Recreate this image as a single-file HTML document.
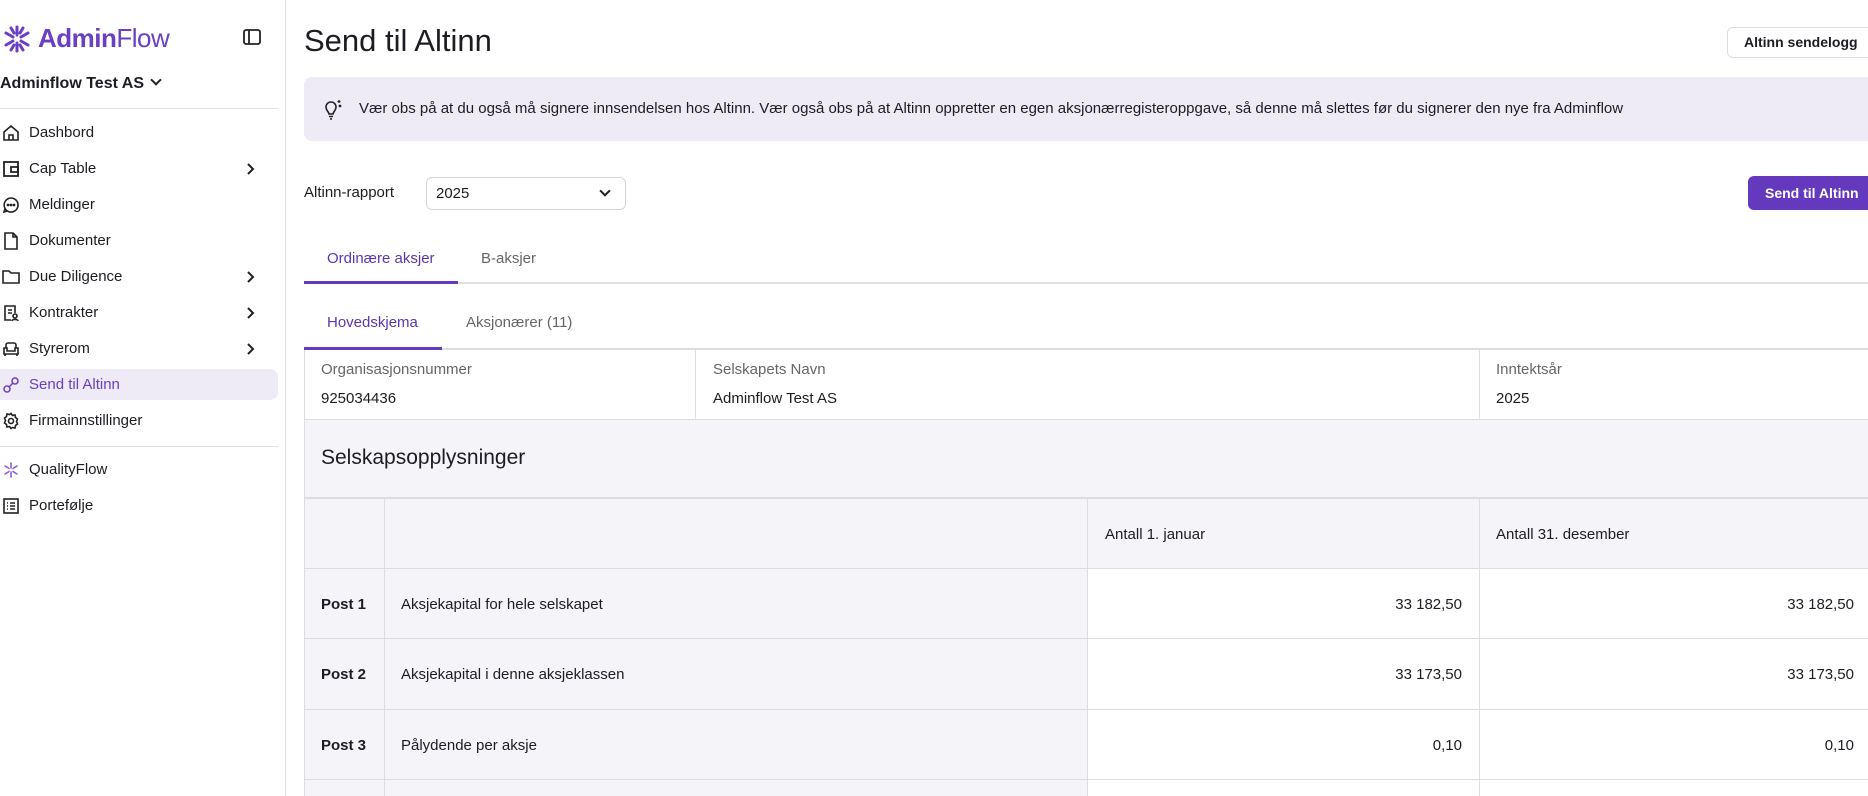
<!DOCTYPE html>
<html><head><meta charset="utf-8"><style>
*{box-sizing:border-box;margin:0;padding:0}
body{width:1868px;height:796px;overflow:hidden;background:#fff;font-family:"Liberation Sans",sans-serif;color:#1c1c22;position:relative}
.a{position:absolute;white-space:nowrap}
.side{position:absolute;left:0;top:0;width:286px;height:796px;border-right:1px solid #e0e0e0}
.nav{position:absolute;left:0;width:278px;height:31px;font-size:15px;line-height:31px;padding-left:29px}
.nav svg{position:absolute;left:2px;top:7px}
.nav svg.chev{left:246px;top:9px}
.hr{position:absolute;background:#e0e0e0;height:1px}
.vr{position:absolute;background:#dedde3;width:1px}
.lbl{font-size:15px;color:#666}
.cell{font-size:15px}
</style></head><body>
<div class="side">
 <svg class="a" style="left:2px;top:24px" width="30" height="30" viewBox="0 0 30 30" fill="none" stroke="#6a3fc4" stroke-width="3" stroke-linecap="round"><path d="M15 3v8M15 19v8M4 9l7 4M19 17l7 4M4 21l7-4M19 13l7-4M9 4l3 5M21 4l-3 5M9 26l3-5M21 26l-3-5"/></svg>
 <div class="a" style="left:38px;top:23px;font-size:26px;color:#6a3fc4;font-weight:bold;letter-spacing:-0.5px">Admin<span style="font-weight:normal">Flow</span></div>
 <svg class="a" style="left:243px;top:29px" width="18" height="16" viewBox="0 0 18 16" fill="none" stroke="#222" stroke-width="1.8"><rect x="1" y="1" width="16" height="14" rx="2"/><path d="M6 1v14"/></svg>
 <div class="a" style="left:0;top:75px;font-size:16px;font-weight:bold">Adminflow Test AS <span style="display:inline-block;width:8px;height:8px;border-right:2px solid #222;border-bottom:2px solid #222;transform:rotate(45deg);margin:0 0 4px 4px"></span></div>
 <div class="hr" style="left:0;top:108px;width:278px"></div>
 <div class="nav" style="top:117px"><svg width="18" height="18" viewBox="0 0 18 18" fill="none" stroke="#222" stroke-width="1.6"><path d="M2 8l7-6 7 6v8H2z"/><path d="M7 16v-5h4v5"/></svg>Dashbord</div>
 <div class="nav" style="top:153px"><svg width="18" height="18" viewBox="0 0 18 18" fill="none" stroke="#222" stroke-width="1.8"><rect x="2" y="2" width="14" height="14"/><path d="M9 7h7v5H9z"/></svg>Cap Table<svg class="chev" width="10" height="14" viewBox="0 0 10 14" fill="none" stroke="#222" stroke-width="2"><path d="M2 2l5 5-5 5"/></svg></div>
 <div class="nav" style="top:189px"><svg width="18" height="18" viewBox="0 0 18 18" fill="none" stroke="#222" stroke-width="1.6"><path d="M9 2a7 7 0 1 1-6 10.5L2 16l3.5-1A7 7 0 0 1 9 2z"/><circle cx="6" cy="9" r=".6" fill="#222"/><circle cx="9" cy="9" r=".6" fill="#222"/><circle cx="12" cy="9" r=".6" fill="#222"/></svg>Meldinger</div>
 <div class="nav" style="top:225px"><svg width="18" height="18" viewBox="0 0 18 18" fill="none" stroke="#222" stroke-width="1.6"><path d="M3 1h8l4 4v12H3z"/><path d="M11 1v4h4"/></svg>Dokumenter</div>
 <div class="nav" style="top:261px"><svg width="18" height="18" viewBox="0 0 18 18" fill="none" stroke="#222" stroke-width="1.6"><path d="M1 3h6l2 2h8v10H1z"/></svg>Due Diligence<svg class="chev" width="10" height="14" viewBox="0 0 10 14" fill="none" stroke="#222" stroke-width="2"><path d="M2 2l5 5-5 5"/></svg></div>
 <div class="nav" style="top:297px"><svg width="18" height="18" viewBox="0 0 18 18" fill="none" stroke="#222" stroke-width="1.6"><path d="M9 16H3V2h10v7"/><path d="M6 6h4M6 9h4"/><circle cx="13" cy="12" r="2"/><path d="M10 17c0-2 6-2 6 0"/></svg>Kontrakter<svg class="chev" width="10" height="14" viewBox="0 0 10 14" fill="none" stroke="#222" stroke-width="2"><path d="M2 2l5 5-5 5"/></svg></div>
 <div class="nav" style="top:333px"><svg width="18" height="18" viewBox="0 0 18 18" fill="none" stroke="#222" stroke-width="1.6"><path d="M4 8V5a2 2 0 0 1 2-2h6a2 2 0 0 1 2 2v3"/><path d="M2 8h3v3h8V8h3v6H2z"/><path d="M3 14v2M15 14v2"/></svg>Styrerom<svg class="chev" width="10" height="14" viewBox="0 0 10 14" fill="none" stroke="#222" stroke-width="2"><path d="M2 2l5 5-5 5"/></svg></div>
 <div class="nav" style="top:369px;background:#eeeaf6;border-radius:0 8px 8px 0;color:#6a3fc4"><svg width="18" height="18" viewBox="0 0 18 18" fill="none" stroke="#6a3fc4" stroke-width="1.5"><circle cx="5" cy="13" r="3"/><circle cx="13" cy="5" r="3"/><path d="M7 11l4-4"/></svg>Send til Altinn</div>
 <div class="nav" style="top:405px"><svg width="18" height="18" viewBox="0 0 18 18" fill="none" stroke="#222" stroke-width="1.6"><circle cx="9" cy="9" r="2.5"/><path d="M9 1.5l1.5 2 2.5-.5.5 2.5 2 1.5-1 2.5 1 2.5-2 1.5-.5 2.5-2.5-.5L9 16.5l-1.5-2-2.5.5-.5-2.5-2-1.5 1-2.5-1-2.5 2-1.5.5-2.5 2.5.5z"/></svg>Firmainnstillinger</div>
 <div class="hr" style="left:0;top:446px;width:278px"></div>
 <div class="nav" style="top:454px"><svg width="18" height="18" viewBox="0 0 18 18" fill="none" stroke="#8a5fd4" stroke-width="1.6" stroke-linecap="round"><path d="M9 2v5M9 11v5M3 5l4 2.5M11 10.5l4 2.5M3 13l4-2.5M11 7.5l4-2.5"/></svg>QualityFlow</div>
 <div class="nav" style="top:490px"><svg width="18" height="18" viewBox="0 0 18 18" fill="none" stroke="#222" stroke-width="1.6"><rect x="2" y="2" width="14" height="14"/><path d="M8 6h5M8 9h5M8 12h5M5 6h1M5 9h1M5 12h1"/></svg>Portefølje</div>
</div>

<div class="a" style="left:304px;top:23px;font-size:31px">Send til Altinn</div>
<div class="a" style="left:1727px;top:27px;width:150px;height:31px;border:1px solid #ddd;border-radius:6px;font-size:14px;font-weight:bold;line-height:29px;padding-left:16px">Altinn sendelogg</div>

<div class="a" style="left:304px;top:77px;width:1580px;height:64px;background:#eeeaf6;border-radius:8px"></div>
<svg class="a" style="left:320px;top:97px" width="24" height="24" viewBox="0 0 24 24" fill="none" stroke="#222" stroke-width="1.6"><path d="M9 17c0-2-3-3.5-3-7a5 5 0 0 1 10 0c0 3.5-3 5-3 7z"/><path d="M9 19.5h4M10 22h2"/><path d="M19 3v3M17.5 4.5h3" stroke-width="1.2"/><circle cx="20" cy="9" r=".6" fill="#222"/></svg>
<div class="a" style="left:359px;top:100px;font-size:15px">Vær obs på at du også må signere innsendelsen hos Altinn. Vær også obs på at Altinn oppretter en egen aksjonærregisteroppgave, så denne må slettes før du signerer den nye fra Adminflow</div>

<div class="a" style="left:304px;top:184px;font-size:15px">Altinn-rapport</div>
<div class="a" style="left:426px;top:177px;width:200px;height:33px;border:1px solid #d6d6d6;border-radius:6px;font-size:15px;line-height:31px;padding-left:9px">2025<span style="position:absolute;right:16px;top:9px;width:8px;height:8px;border-right:2px solid #222;border-bottom:2px solid #222;transform:rotate(45deg)"></span></div>
<div class="a" style="left:1748px;top:176px;width:130px;height:34px;background:#6439bd;border-radius:6px;color:#fff;font-size:14px;font-weight:bold;line-height:34px;padding-left:17px">Send til Altinn</div>

<div class="a" style="left:327px;top:250px;font-size:15px;color:#5b36b0">Ordinære aksjer</div>
<div class="a" style="left:481px;top:250px;font-size:15px;color:#666">B-aksjer</div>
<div class="hr" style="left:304px;top:282px;width:1564px;height:2px"></div>
<div class="a" style="left:304px;top:281px;width:154px;height:3px;background:#6439bd"></div>

<div class="a" style="left:327px;top:314px;font-size:15px;color:#5b36b0">Hovedskjema</div>
<div class="a" style="left:466px;top:314px;font-size:15px;color:#666">Aksjonærer (11)</div>
<div class="hr" style="left:304px;top:348px;width:1564px;height:2px;background:#ddd"></div>
<div class="a" style="left:304px;top:347px;width:138px;height:3px;background:#6439bd"></div>

<div class="vr" style="left:304px;top:350px;height:446px"></div>
<div class="vr" style="left:695px;top:350px;height:69px"></div>
<div class="vr" style="left:1479px;top:350px;height:69px"></div>
<div class="a lbl" style="left:321px;top:361px">Organisasjonsnummer</div>
<div class="a cell" style="left:321px;top:390px">925034436</div>
<div class="a lbl" style="left:713px;top:361px">Selskapets Navn</div>
<div class="a cell" style="left:713px;top:390px">Adminflow Test AS</div>
<div class="a lbl" style="left:1496px;top:361px">Inntektsår</div>
<div class="a cell" style="left:1496px;top:390px">2025</div>
<div class="hr" style="left:305px;top:419px;width:1563px;background:#ddd"></div>

<div class="a" style="left:305px;top:420px;width:1563px;height:78px;background:#f5f4f9"></div>
<div class="a" style="left:321px;top:446px;font-size:21px">Selskapsopplysninger</div>
<div class="hr" style="left:305px;top:497px;width:1563px;height:2px;background:#ddd"></div>

<div class="a" style="left:305px;top:499px;width:782px;height:297px;background:#f5f4f9"></div>
<div class="a" style="left:1087px;top:499px;width:781px;height:69px;background:#f5f4f9"></div>
<div class="vr" style="left:384px;top:499px;height:297px"></div>
<div class="vr" style="left:1087px;top:499px;height:297px"></div>
<div class="vr" style="left:1479px;top:499px;height:297px"></div>
<div class="hr" style="left:305px;top:568px;width:1563px;background:#ddd"></div>
<div class="hr" style="left:305px;top:638px;width:1563px;background:#ddd"></div>
<div class="hr" style="left:305px;top:709px;width:1563px;background:#ddd"></div>
<div class="hr" style="left:305px;top:779px;width:1563px;background:#ddd"></div>

<div class="a cell" style="left:1105px;top:526px">Antall 1. januar</div>
<div class="a cell" style="left:1496px;top:526px">Antall 31. desember</div>

<div class="a cell" style="left:321px;top:596px;font-weight:bold">Post 1</div>
<div class="a cell" style="left:401px;top:596px">Aksjekapital for hele selskapet</div>
<div class="a cell" style="right:406px;top:596px">33 182,50</div>
<div class="a cell" style="right:14px;top:596px">33 182,50</div>

<div class="a cell" style="left:321px;top:666px;font-weight:bold">Post 2</div>
<div class="a cell" style="left:401px;top:666px">Aksjekapital i denne aksjeklassen</div>
<div class="a cell" style="right:406px;top:666px">33 173,50</div>
<div class="a cell" style="right:14px;top:666px">33 173,50</div>

<div class="a cell" style="left:321px;top:737px;font-weight:bold">Post 3</div>
<div class="a cell" style="left:401px;top:737px">Pålydende per aksje</div>
<div class="a cell" style="right:406px;top:737px">0,10</div>
<div class="a cell" style="right:14px;top:737px">0,10</div>
</body></html>
